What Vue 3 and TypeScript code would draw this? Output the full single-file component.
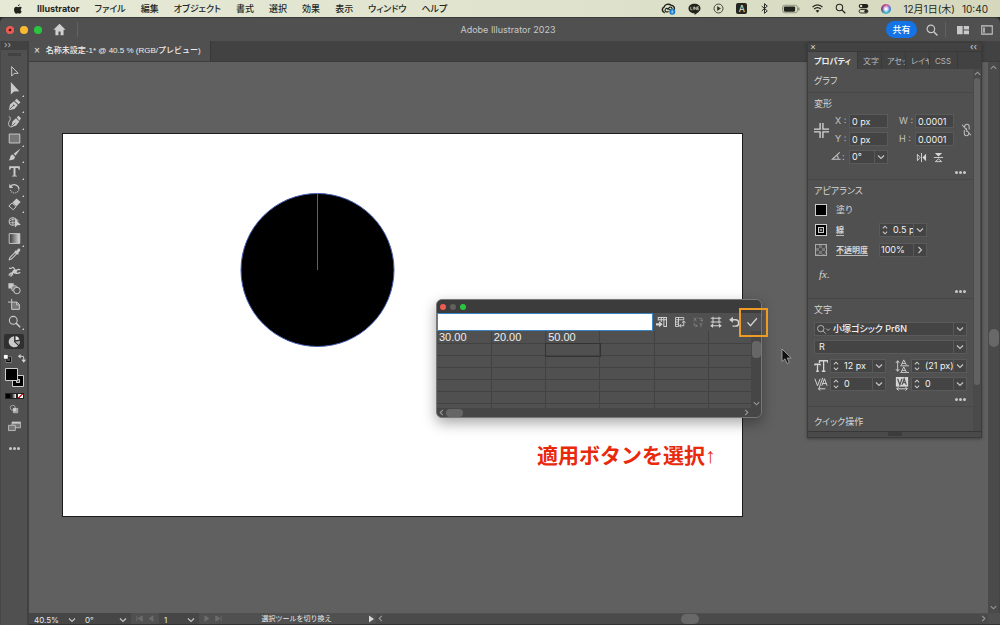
<script setup lang="ts">
import { ref } from 'vue'

interface Tool {
  name: string
  art: string
  flyout?: boolean
}

const menus: string[] = ['ファイル', '編集', 'オブジェクト', '書式', '選択', '効果', '表示', 'ウィンドウ', 'ヘルプ']

const tools: Tool[] = [
  { name: '選択', art: '<path d="M4.5 2v11.6l3-3.2 5-.2z" fill="none" stroke="currentColor" stroke-width="1.2"/>' },
  { name: 'ダイレクト選択', flyout: true, art: '<path d="M3.5 0v15.500l3.900-3.900 6.500-.3z" fill="currentColor"/>' },
  { name: 'ペン', flyout: true, art: '<path d="M1 15 2.500 8l4.800-4 4.800 4.500L8 13.500z" fill="currentColor"/><path d="m8.300 3.300 2.300-2.500 4.700 4.500-2.300 2.500z" fill="currentColor"/><path d="m2 14 4.500-4.500" stroke="#505050"/><circle cx="7" cy="9" r="1.100" fill="#505050"/>' },
  { name: '曲線', flyout: true, art: '<path d="M4 15 5.500 8l4.300-4 4.200 4-4 4.800z" fill="currentColor"/><path d="M10.800 3.200 13 .800l3 3.200-2 3z" fill="currentColor"/><path d="m5 13.500 4-4" stroke="#505050"/><path d="M1 2c2 0 2 2 1.500 4S0 9 .8 12s3 3 5 2" fill="none" stroke="currentColor" stroke-width="1.100"/>' },
  { name: '長方形', flyout: true, art: '<path d="M1.500 2.500h13v11h-13z" fill="#777" stroke="currentColor" stroke-width="1.200"/>' },
  { name: 'ブラシ', flyout: true, art: '<path d="M15.500.5 7 7l2.300 2.600z" fill="currentColor"/><path d="M6 8 8.600 11c0 3-3.600 4.500-8.100 4 1.800-.7 1.800-2 2.100-3.300C3 9.300 4.400 8.100 6 8z" fill="currentColor"/>' },
  { name: '文字', flyout: true, art: '<path d="M1.500 1.500h13v4.300h-1.300c-.3-1.600-.8-2.200-2-2.200H9.200v8.600c0 .8.600 1 1.800 1v1.100H5v-1.100c1.200 0 1.800-.2 1.800-1V3.600h-2c-1.200 0-1.700.6-2 2.200H1.500z" fill="currentColor"/>' },
  { name: '回転', flyout: true, art: '<path d="M3 5.500C6 1.500 13 3 13.500 8.500" fill="none" stroke="currentColor" stroke-width="1.500"/><path d="M13.400 9C12.500 15 3.500 15 3 9" fill="none" stroke="currentColor" stroke-width="1.300" stroke-dasharray="1.300 1.300"/><path d="M1.500 2.500v5h5z" fill="currentColor"/>' },
  { name: '消しゴム', flyout: true, art: '<path d="m5.500 5.500 5-5 5 4.500-5 5z" fill="currentColor"/><path d="m5 6.200 5 4.500L6.500 14.500 1 9.800z" fill="none" stroke="currentColor" stroke-width="1.200"/>' },
  { name: '形状形成', art: '<circle cx="6" cy="8" r="4.800" fill="none" stroke="currentColor" stroke-width="1.100"/><path d="M1.200 8C5 5 9 4 13 7M1.500 9.500h7M6 3v10" fill="none" stroke="currentColor"/><path d="M8.500 4.500v11l2.900-2.900 4.400-.2z" fill="currentColor"/>' },
  { name: 'グラデーション', flyout: true, art: '<defs><linearGradient id="toolFade"><stop stop-color="#333"/><stop offset="1" stop-color="#ddd"/></linearGradient></defs><path d="M1.500 2h13v12h-13z" fill="url(#toolFade)" stroke="currentColor" stroke-width="1.200"/>' },
  { name: 'スポイト', art: '<path d="m1.500 14.500.8-2.700L8.800 5.300l1.900 1.900-6.500 6.500z" fill="none" stroke="currentColor" stroke-width="1.300"/><path d="m8 4 1.200-1.200.9.8 2-2.400c1.500-1.500 4 .5 2.700 2.500L12.400 6l1 1-1.200 1.200z" fill="currentColor"/>' },
  { name: 'パペットワープ', art: '<path d="M1.500 4c4 1 3.500-2 5-1s1 3 3 3.500S12 4 15 6M1 13c1.500-3 4-4 7-3.500s4 2 7-.5M3 14c2-1 3-3 3-6M10 6v5" fill="none" stroke="currentColor" stroke-width="1.600"/><circle cx="8" cy="8" r="2.400" fill="currentColor"/>' },
  { name: 'ブレンド', art: '<path d="M.5 1.500h6.500v6.500H.5z" fill="currentColor"/><rect x="4.500" y="4.500" width="6.500" height="6.500" rx="2" fill="#888" stroke="currentColor"/><circle cx="11" cy="10.500" r="4" fill="#505050" stroke="currentColor" stroke-width="1.200"/>' },
  { name: 'アートボード', art: '<path d="M4.500 1v4M0 5h4" stroke="currentColor" stroke-width="1.200"/><path d="M4.500 5H11l3 3v6H4.500z" fill="#777" stroke="currentColor" stroke-width="1.200"/><path d="M10.500 5v3.500H14" fill="none" stroke="currentColor"/>' },
  { name: 'ズーム', flyout: true, art: '<circle cx="6.500" cy="6.500" r="4.800" fill="none" stroke="currentColor" stroke-width="1.300"/><path d="m10 10 5 5" stroke="currentColor" stroke-width="1.800"/>' },
]

const graphActions: Tool[] = [
  { name: 'データの読み込み', art: '<path d="M3 6V2h11v12h-4M3 5h11M7 2v6M10.500 2v12" fill="none" stroke="currentColor" stroke-width="1.400"/><path d="M0 9.500h4V7l5 4-5 4v-2.500H0z" fill="currentColor"/>' },
  { name: '行列置換', art: '<path d="M2 2h11v3H2zM2 5v9h4V2M2 8h4M2 11h4" fill="none" stroke="currentColor" stroke-width="1.200"/><path d="M8 13h5V7M9.500 11 7 13l2.500 2M11 9l2-2.500L15 9" fill="none" stroke="currentColor" stroke-width="1.300"/>' },
  { name: 'XY軸の入れ替え', art: '<g opacity=".35" fill="none" stroke="currentColor" stroke-width="1.200"><path d="m2 2 4 5M6 2 2 7M10 9l2 3 2-3M12 12v3M9 3h4v4M11 5l2 2 2-2M3 9v4h4M5 11l2 2-2 2"/></g>' },
  { name: 'セルスタイル', art: '<path d="M1 3h14M1 8h14M4 1v9M12 1v9M2 13h12M4 11l-2.500 2L4 15M12 11l2.500 2-2.500 2" fill="none" stroke="currentColor" stroke-width="1.400"/>' },
  { name: '復帰', art: '<path d="M3 5h7a4 4 0 0 1 0 8.500H6" fill="none" stroke="currentColor" stroke-width="1.900"/><path d="M6.500 1v8L1.500 5z" fill="currentColor"/>' },
  { name: '適用', art: '<path d="m2 8.500 4 4.500 8.500-10" fill="none" stroke="currentColor" stroke-width="1.800"/>' },
]

const graphRows = ref<string[][]>([
  ['30.00', '20.00', '50.00', '', '', ''],
  ...Array.from({ length: 6 }, () => ['', '', '', '', '', '']),
])
const entry = ref('')
const panelTabs: string[] = ['文字', 'アセッ', 'レイヤ', 'CSS']
const geometry = ref({ x: '0 px', y: '0 px', w: '0.0001', h: '0.0001', angle: '0°' })
const stroke = ref('0.5 px')
const opacity = ref('100%')
const textFields = ref([
  { name: 'フォントサイズ', value: '12 px', art: '<path d="M1 6h6M4 6v8M2.500 14h3M1 5.500v2M7 5.500v2M6 2h10M11 2v12M9 14h4M6.200 1.500v3M15.800 1.500v3" fill="none" stroke="currentColor" stroke-width="1.500"/>' },
  { name: '行送り', value: '(21 px)', art: '<path d="M7 7l3-6 3 6M8 5h4M7 15l3-6 3 6M8 13h4M6 7.800h10M6 15.500h10M3 2v12M1 4.500 3 2l2 2.500M1 11.500 3 14l2-2.500" fill="none" stroke="currentColor"/>' },
  { name: 'カーニング', value: '0', art: '<path d="m1 2 3 8 3-8M6 12 10 1M9 10l3-8 3 8M10 7.500h4M5 13.500h8M7 11.500l-2 2 2 2" fill="none" stroke="currentColor" stroke-width="1.100"/>' },
  { name: 'トラッキング', value: '0', art: '<path d="M1 0h14v11H1z" fill="currentColor"/><path d="m3 2 2.500 7L8 2M8 9l2.500-7L13 9M9 6.500h3" fill="none" stroke="#505050" stroke-width="1.400"/><path d="M2 13.500h12M4 11.500l-2 2 2 2M12 11.500l2 2-2 2" fill="none" stroke="currentColor" stroke-width="1.100"/>' },
])
</script>

<template>
  <div class="desktop">
    <header class="menubar">
      <nav class="menus" aria-label="メニュー">
        <svg class="apple" viewBox="0 0 16 16" aria-hidden="true"><path d="M10.800.2c.1 1.600-1.400 3.200-2.900 3.100C7.700 1.800 9.300.3 10.800.2zM13.900 11.800c-.8 1.900-1.900 3.700-3.200 3.700-1.100 0-1.400-.7-2.600-.7s-1.600.7-2.600.7C3.600 15.500 1.600 12 1.600 9c0-2.900 1.800-4.600 3.700-4.600 1.200 0 2 .7 2.900.7.900 0 1.800-.8 3.200-.8 1 0 2.100.5 2.700 1.500-2.600 1.500-2.200 4.900-.2 6z" fill="#20221c" /></svg>
        <button class="menu strong">Illustrator</button>
        <button v-for="menu in menus" :key="menu" class="menu">{{ menu }}</button>
      </nav>
      <div class="tray">
        <svg class="wide" viewBox="0 0 20 16"><path d="M5 13a4 4 0 0 1-1-7.500C5 2 10 0 13.500 3c3 0 5 3 4 6" fill="none" stroke="#20221c" stroke-width="2" /><path d="M10 11c-3 2.500-6-.5-4-3s4 0 6 1 4-1 2-3-4 1-5 3" fill="none" stroke="#20221c" stroke-width="1.500" /><circle cx="15" cy="11.500" r="4" fill="#1479c9" /><path d="M13 12h4M15 9v5" stroke="#b8dbef" /></svg>
        <svg class="bubble" viewBox="0 0 16 16"><path d="M8 1c4.500 0 8 2.700 8 6.200 0 3.300-3.500 5.500-7.500 8.300-.5.300-.7-.2-.4-1.800C3.500 13.500 0 10.800 0 7.200 0 3.700 3.500 1 8 1z" fill="#20221c" /><path d="M3 5v4h2M6.500 5v4M8 9V5l2.500 4V5M14 5h-2v4h2M12 7h2" fill="none" stroke="#d8dcc4" stroke-width=".9" /></svg>
        <svg viewBox="0 0 16 16"><circle cx="8" cy="8" r="6.500" fill="none" stroke="#34372c" stroke-width="1.300" /><path d="m6 4.500 5.500 3.500L6 11.500z" fill="#34372c" /></svg>
        <span class="ime">A</span>
        <svg viewBox="0 0 16 16"><path d="m4 4.500 8 7L8 15V1l4 3.500-8 7" fill="none" stroke="#20221c" stroke-width="1.400" /></svg>
        <svg class="battery" viewBox="0 0 24 16"><rect x=".7" y="3" width="20" height="10" rx="3" fill="none" stroke="#777a6c" /><rect x="2.500" y="4.500" width="15" height="7" rx="1.500" fill="#20221c" /><path d="M22.500 6v4" stroke="#777a6c" stroke-width="1.500" /></svg>
        <svg viewBox="0 0 16 16"><path d="M.8 6c4-4.500 10.400-4.500 14.400 0M3.200 8.700c2.800-2.800 6.800-2.800 9.600 0" fill="none" stroke="#20221c" stroke-width="1.900" /><path d="m8 14-2.700-3c1.500-1.300 3.900-1.300 5.400 0z" fill="#20221c" /></svg>
        <svg viewBox="0 0 16 16"><circle cx="6.500" cy="6.500" r="4.700" fill="none" stroke="#20221c" stroke-width="1.500" /><path d="m10 10 5 5" stroke="#20221c" stroke-width="1.800" /></svg>
        <svg viewBox="0 0 16 16"><rect x="1" y="1.500" width="14" height="6" rx="3" fill="#20221c" /><circle cx="4.500" cy="4.500" r="1.800" fill="#d8dcc4" /><rect x="1.600" y="9.500" width="12.800" height="5" rx="2.500" fill="none" stroke="#20221c" stroke-width="1.300" /><circle cx="11.500" cy="12" r="2.200" fill="#20221c" /></svg>
        <span class="siri"></span>
        <time class="date">12月1日(木)</time>
        <time class="clock">10:40</time>
      </div>
    </header>

    <div class="app">
      <header class="titlebar">
        <div class="title-left">
          <div class="lights"><i class="red edited"></i><i class="amber"></i><i class="green"></i></div>
          <button aria-label="ホーム"><svg class="home" viewBox="0 0 16 16"><path d="M8 1 .500 8.200H3V15h3.700v-4.500h2.600V15H13V8.200h2.500z" fill="#d0d0d0" /></svg></button>
          <span class="rule"></span>
        </div>
        <h1>Adobe Illustrator 2023</h1>
        <div class="title-right">
          <button class="share">共有</button>
          <button aria-label="検索"><svg class="icon" viewBox="0 0 16 16"><circle cx="6.500" cy="6.500" r="5" fill="none" stroke="currentColor" stroke-width="1.600" /><path d="m10 10 5.300 5.300" stroke="currentColor" stroke-width="2" /></svg></button>
          <span class="rule"></span>
          <button aria-label="ドキュメントの配置"><svg class="icon" viewBox="0 0 16 16"><path d="M0 2.500h7.500v11H0zM9 2.500h7v4.800H9zM9 8.700h7v4.800H9z" fill="currentColor" /></svg></button>
          <button aria-label="ワークスペース"><svg class="icon" viewBox="0 0 16 16"><path d="M1 2.500h14v11H1z" fill="none" stroke="currentColor" stroke-width="1.400" /><path d="M3 4.500h2v7H3z" fill="currentColor" /></svg></button>
        </div>
      </header>

      <div class="body">
        <aside class="toolbar" aria-label="ツール">
          <div class="toolbar-head">››</div>
          <div class="grip"></div>
          <div class="tools">
            <button v-for="tool in tools" :key="tool.name" class="tool" :class="{ flyout: tool.flyout }" :aria-label="tool.name">
              <svg viewBox="0 0 16 16" v-html="tool.art"></svg>
            </button>
          </div>
          <button class="tool active" aria-label="円グラフ"><svg viewBox="0 0 16 16"><path d="M7.500 1.500a6.800 6.800 0 1 0 5 11.600L7.500 8.500z" fill="currentColor" /><path d="M13.300 12.300A6.800 6.800 0 0 0 14.800 7L8.800 8.200z" fill="#aaa" /><path d="M9.300 6.500V1.200a6 6 0 0 1 4.800 4.200z" fill="#e6e6e6" /></svg></button>
          <div class="swaps">
            <svg viewBox="0 0 16 16"><path d="M6 6h8v8H6z" fill="none" stroke="#000" stroke-width="3" /><path d="M5 5h10v10H5z" fill="none" stroke="currentColor" /><path d="M1 1h8v8H1z" fill="#fff" stroke="#222" /></svg>
            <svg viewBox="0 0 16 16"><path d="M4 4h5q3 0 3 3v5M6.500 1 3 4l3.500 3M9 10l3 4 3-4" fill="none" stroke="currentColor" stroke-width="1.800" /></svg>
          </div>
          <svg class="fillstroke" viewBox="0 0 21 21"><path d="M8.500 8.500h11v11h-11z" fill="#505050" stroke="#ccc" /><path d="M10.500 10.500h7v7h-7z" fill="#505050" stroke="#000" stroke-width="3" /><path d="M12.500 12.500h3v3h-3z" fill="#505050" stroke="#ccc" /><path d="M1.500 1.500h12v12h-12z" fill="#000" stroke="#ccc" /></svg>
          <div class="modes"><i class="solid"></i><i class="fade"></i><i class="none"></i></div>
          <button class="tool small" aria-label="描画モード"><svg viewBox="0 0 16 16"><circle cx="6" cy="6" r="4" fill="none" stroke="currentColor" /><path d="M7 7h7v7H7z" fill="#999" stroke="currentColor" /><circle cx="9" cy="9" r="3" fill="currentColor" /></svg></button>
          <button class="tool" aria-label="スクリーンモード"><svg viewBox="0 0 16 16"><path d="M5 2.500h10.500v7H5z" fill="#777" stroke="currentColor" /><path d="M5 3.500h10" stroke="currentColor" stroke-width="2" /><path d="M.5 6.500H9v6.500H.5z" fill="#777" stroke="currentColor" /></svg></button>
          <button class="more" aria-label="ツールバーを編集"><i></i><i></i><i></i></button>
        </aside>

        <main class="document">
          <div class="doc-tabs">
            <div class="doc-tab"><button aria-label="閉じる">×</button><span>名称未設定-1* @ 40.5 % (RGB/プレビュー)</span></div>
          </div>
          <div class="workspace">
            <section class="canvas">
              <div class="artboard"></div>
              <svg class="pie" viewBox="0 0 156 156"><circle cx="77.500" cy="78" r="76.500" fill="#000" stroke="#4660b4" /><path d="M77.500 2v76" stroke="#4660b4" /></svg>
              <p class="note">適用ボタンを選択↑</p>
            </section>
            <div class="vscroll"><svg class="chev" viewBox="0 0 10 10"><path d="m2 6.500 3-3 3 3" /></svg><i></i><svg class="chev" viewBox="0 0 10 10"><path d="m2 3.500 3 3 3-3" /></svg></div>
          </div>
          <footer class="status">
            <label class="pick zoom"><select aria-label="ズーム"><option>40.5%</option></select><svg class="chev" viewBox="0 0 10 10"><path d="m2 3.500 3 3 3-3" /></svg></label>
            <label class="pick turn"><select aria-label="回転"><option>0°</option></select><svg class="chev" viewBox="0 0 10 10"><path d="m2 3.500 3 3 3-3" /></svg></label>
            <div class="pager"><svg viewBox="0 0 20 10"><path d="M1 2v6M7 2v6L2.500 5zM19 2v6l-4.500-3z" /></svg></div>
            <label class="pick board"><select aria-label="アートボード"><option>1</option></select><svg class="chev" viewBox="0 0 10 10"><path d="m2 3.500 3 3 3-3" /></svg></label>
            <div class="pager"><svg viewBox="0 0 20 10"><path d="M1 2v6l4.500-3zM13 2v6l4.500-3zM19 2v6" /></svg></div>
            <span class="hint">選択ツールを切り換え</span>
            <svg class="play" viewBox="0 0 10 10"><path d="M3 1.500v7L8 5z" fill="#d8d8d8" /></svg>
            <div class="hscroll"><svg class="chev" viewBox="0 0 10 10"><path d="m6.500 2-3 3 3 3" /></svg><i></i><svg class="chev" viewBox="0 0 10 10"><path d="m3.500 2 3 3-3 3" /></svg></div>
          </footer>
        </main>
      </div>
    </div>

    <section class="graph" aria-label="グラフデータ">
      <div class="graph-title"><i class="red"></i><i class="grey"></i><i class="green"></i></div>
      <div class="graph-bar">
        <input v-model="entry" aria-label="セルの値">
        <button v-for="action in graphActions" :key="action.name" :aria-label="action.name"><svg viewBox="0 0 16 16" v-html="action.art"></svg></button>
      </div>
      <div class="graph-main">
        <div class="sheet">
          <table>
            <tbody>
              <tr v-for="(row, r) in graphRows" :key="r">
                <td v-for="(cell, c) in row" :key="c" :class="{ selected: r === 1 && c === 2 }">{{ cell }}</td>
              </tr>
            </tbody>
          </table>
        </div>
        <div class="sheet-v"><i></i><svg class="chev" viewBox="0 0 10 10"><path d="m2 3.500 3 3 3-3" /></svg></div>
      </div>
      <div class="sheet-h"><svg class="chev" viewBox="0 0 10 10"><path d="m6.500 2-3 3 3 3" /></svg><i></i><svg class="chev" viewBox="0 0 10 10"><path d="m3.500 2 3 3-3 3" /></svg></div>
    </section>
    <div class="marker"></div>
    <svg class="cursor" viewBox="0 0 11 17"><path d="M1 1v12.500l3-2.700 2 4.700 2.200-1L6.200 10h4z" fill="#111" stroke="#bbb" stroke-width=".7" /></svg>

    <aside class="panel" aria-label="プロパティ">
      <div class="panel-head"><button aria-label="閉じる">×</button><span>‹‹</span></div>
      <div class="panel-tabs" role="tablist">
        <button class="current" role="tab" aria-selected="true">プロパティ</button>
        <button v-for="tab in panelTabs" :key="tab" role="tab">{{ tab }}</button>
      </div>
      <div class="panel-body">
        <div class="sections">
          <section class="kind">グラフ</section>
          <section>
            <h2>変形</h2>
            <div class="transform">
              <svg class="origin" viewBox="0 0 16 16"><path d="M6.500 0v6.500H0M9.500 0v6.500H16M6.500 16V9.500H0M9.500 16V9.500H16" fill="none" stroke="currentColor" stroke-width="1.400" /></svg>
              <label for="gx">X :</label><input id="gx" v-model="geometry.x" class="box">
              <label for="gw">W :</label><input id="gw" v-model="geometry.w" class="box">
              <svg class="link" viewBox="0 0 12 16"><path d="M4 6V4a2.500 2.500 0 0 1 5 0v3.500M3.500 8v4a2.500 2.500 0 0 0 5 0V11M6 6v4M1 2l10 12" fill="none" stroke="currentColor" stroke-width="1.200" /></svg>
              <label for="gy">Y :</label><input id="gy" v-model="geometry.y" class="box">
              <label for="gh">H :</label><input id="gh" v-model="geometry.h" class="box">
              <label for="ga" class="angle-label"><svg viewBox="0 0 12 12"><path d="M9.500 1.500 1.500 9h9M6 4.500c1.500 1 2 2.500 2 4.500" fill="none" stroke="currentColor" stroke-width="1.200" /></svg>:</label>
              <span class="pick box angle"><select id="ga" v-model="geometry.angle"><option>0°</option></select><svg class="chev" viewBox="0 0 10 10"><path d="m2 3.500 3 3 3-3" /></svg></span>
              <span class="flips">
                <button aria-label="水平方向に反転"><svg viewBox="0 0 12 12"><path d="M6 1v10" stroke="currentColor" /><path d="M1.500 2.500v7L4.500 6z" fill="none" stroke="currentColor" /><path d="M11 2v8L7 6z" fill="currentColor" /></svg></button>
                <button aria-label="垂直方向に反転"><svg viewBox="0 0 12 12"><path d="M1 6h10" stroke="currentColor" /><path d="M2.500 10.500h7L6 7.500z" fill="none" stroke="currentColor" /><path d="M2 1h8L6 5z" fill="currentColor" /></svg></button>
              </span>
            </div>
            <button class="more" aria-label="変形の詳細"><i></i><i></i><i></i></button>
          </section>
          <section class="appearance">
            <h2>アピアランス</h2>
            <div class="look"><i class="swatch"></i><span>塗り</span></div>
            <div class="look">
              <i class="swatch ring"></i><label for="sw" class="under">線</label>
              <span class="combo box"><svg class="spin" viewBox="0 0 8 14"><path d="m1.500 5 2.500-2.500L6.500 5M1.500 9 4 11.500 6.500 9" /></svg><input id="sw" v-model="stroke"><svg class="chev" viewBox="0 0 10 10"><path d="m2 3.500 3 3 3-3" /></svg></span>
            </div>
            <div class="look">
              <i class="swatch checks"></i><label for="op" class="under">不透明度</label>
              <span class="combo box"><input id="op" v-model="opacity"><svg class="chev" viewBox="0 0 10 10"><path d="m3.500 2 3 3-3 3" /></svg></span>
            </div>
            <button class="fx">fx.</button>
            <button class="more" aria-label="アピアランスの詳細"><i></i><i></i><i></i></button>
          </section>
          <section class="type">
            <h2>文字</h2>
            <label class="pick box family"><svg class="find" viewBox="0 0 16 12"><circle cx="5" cy="5" r="3.500" /><path d="m7.500 7.500 3 3M11 5l2 2 2-2" /></svg><select aria-label="フォント"><option>小塚ゴシック Pr6N</option></select><svg class="chev" viewBox="0 0 10 10"><path d="m2 3.500 3 3 3-3" /></svg></label>
            <label class="pick box weight"><select aria-label="スタイル"><option>R</option></select><svg class="chev" viewBox="0 0 10 10"><path d="m2 3.500 3 3 3-3" /></svg></label>
            <div class="metrics">
              <label v-for="field in textFields" :key="field.name" class="metric">
                <svg class="glyph" viewBox="0 0 16 16" v-html="field.art"></svg>
                <span class="combo box"><svg class="spin" viewBox="0 0 8 14"><path d="m1.500 5 2.500-2.500L6.500 5M1.500 9 4 11.500 6.500 9" /></svg><input v-model="field.value" :aria-label="field.name"><svg class="chev" viewBox="0 0 10 10"><path d="m2 3.500 3 3 3-3" /></svg></span>
              </label>
            </div>
            <button class="more" aria-label="文字の詳細"><i></i><i></i><i></i></button>
          </section>
          <section class="quick"><h2>クイック操作</h2></section>
        </div>
        <div class="panel-scroll"><svg class="chev" viewBox="0 0 10 10"><path d="m2 6.500 3-3 3 3" /></svg><i></i></div>
      </div>
      <div class="panel-foot"><i></i></div>
    </aside>
  </div>
</template>

<style>
html,
body {
  margin: 0;
  background: #2a2a2a;
  overflow: hidden;
}
</style>

<style scoped>
* {
  box-sizing: border-box;
}
.desktop {
  position: relative;
  height: 100vh;
  display: flex;
  flex-direction: column;
  font-family: Inter, 'Noto Sans CJK JP', sans-serif;
  font-size: 9px;
  line-height: 12px;
  color: #d6d6d6;
}
button,
input,
select {
  font: inherit;
  color: inherit;
  background: none;
  border: 0;
  padding: 0;
  margin: 0;
  min-width: 0;
  outline: 0;
}
select {
  appearance: none;
}
button {
  display: flex;
  align-items: center;
  justify-content: center;
  white-space: nowrap;
}
svg {
  display: block;
  flex: none;
}
h1,
h2,
p {
  margin: 0;
  font-size: inherit;
  font-weight: 400;
}
.chev {
  width: 10px;
  height: 10px;
  fill: none;
  stroke: #c4c4c4;
  stroke-width: 1.2;
}
.vscroll .chev,
.hscroll .chev,
.sheet-v .chev,
.sheet-h .chev,
.panel-scroll .chev {
  width: 9px;
  height: 9px;
  stroke: #999;
}
.menubar {
  flex: none;
  height: 17px;
  display: flex;
  justify-content: space-between;
  align-items: center;
  padding: 0 12px 0 13px;
  background: linear-gradient(90deg, #e5e9d5, #e0e4cf 50%, #d5d8bc);
  color: #25271f;
}
.menus,
.tray {
  display: flex;
  align-items: center;
}
.menus {
  gap: 15px;
  font-feature-settings: 'palt';
  font-weight: 500;
}
.apple {
  width: 10px;
  height: 10px;
}
.strong {
  margin-left: -1px;
  font-weight: 700;
}
.tray {
  gap: 12px;
  font-size: 10px;
}
.tray svg {
  width: 11px;
  height: 11px;
}
.tray .wide {
  width: 15px;
  height: 12px;
}
.tray .bubble {
  width: 13px;
  height: 12px;
}
.tray .battery {
  width: 18px;
  height: 12px;
}
.ime {
  width: 11px;
  height: 11px;
  border-radius: 2px;
  background: #25271f;
  color: #e0e4cf;
  font-size: 9px;
  line-height: 11px;
  text-align: center;
}
.siri {
  width: 10px;
  height: 10px;
  border-radius: 50%;
  background: radial-gradient(#f2f4ff 15%, transparent 55%), conic-gradient(#e05ba2, #3c7be0, #34c2c2, #6b3b8e, #d84a7c);
}
.date {
  font-feature-settings: 'palt';
}
.clock {
  margin-left: -5px;
}
.app {
  flex: 1;
  min-height: 0;
  display: flex;
  flex-direction: column;
  background: #505050;
  border-top: 1px solid #3a3a3a;
  border-radius: 5px 5px 0 0;
}
.titlebar {
  flex: none;
  height: 23px;
  display: grid;
  grid-template-columns: 1fr auto 1fr;
  align-items: center;
  padding: 0 6px;
}
.titlebar h1 {
  padding-left: 16px;
  color: #c8c8c8;
}
.title-left,
.title-right,
.lights {
  display: flex;
  align-items: center;
}
.title-left {
  gap: 11px;
}
.lights {
  gap: 6px;
}
.lights i {
  width: 8px;
  height: 8px;
  border-radius: 50%;
}
.red {
  background: #f05b54;
}
.lights .edited {
  background: radial-gradient(#5a0d0a 20%, #f05b54 30%);
}
.amber {
  background: #fbb92f;
}
.green {
  background: #2ac63f;
}
.home {
  width: 13px;
  height: 13px;
}
.rule {
  width: 1px;
  height: 15px;
  background: #626262;
}
.title-right {
  justify-content: flex-end;
  gap: 8px;
}
.icon {
  width: 12px;
  height: 12px;
  color: #c8c8c8;
}
.title-right button:not(.share) {
  padding: 0 1px;
}
.title-right button:last-child {
  margin-left: 2px;
}
.share {
  width: 31px;
  height: 17px;
  border-radius: 9px;
  background: #1473e6;
  color: #fff;
  font-weight: 500;
}
.title-right .rule {
  margin: 0 2px 0 -2px;
}
.body {
  flex: 1;
  min-height: 0;
  display: flex;
}
.toolbar {
  flex: none;
  width: 29px;
  border-right: 2px solid #414141;
  border-left: 1px solid #474747;
  display: flex;
  flex-direction: column;
  align-items: center;
}
.toolbar-head {
  align-self: stretch;
  height: 9px;
  padding-left: 3px;
  background: #424242;
  line-height: 7px;
  color: #bbb;
}
.grip {
  width: 13px;
  height: 3px;
  margin: 3px 0 9px;
  background: #424242;
}
.tools {
  height: 263px;
  display: flex;
  flex-direction: column;
  justify-content: space-between;
}
.tool {
  position: relative;
  color: #cacaca;
}
.tool svg {
  width: 13px;
  height: 13px;
}
.flyout::after {
  content: '';
  position: absolute;
  right: -3px;
  bottom: -2px;
  border: 1px solid;
  border-color: transparent #ccc #ccc transparent;
}
.active {
  width: 20px;
  height: 15px;
  margin: 6px 0 5px;
  border-radius: 2px;
  background: #303030;
}
.swaps {
  display: flex;
  gap: 5px;
}
.swaps svg {
  width: 9px;
  height: 9px;
}
.fillstroke {
  width: 21px;
  height: 21px;
  margin: 4px 0 5px;
}
.modes {
  display: flex;
}
.modes i {
  width: 6px;
  height: 6px;
  border: 1px solid #222;
}
.solid {
  background: #000;
}
.fade {
  background: linear-gradient(90deg, #222, #fff);
}
.modes .none {
  width: 7px;
  background: linear-gradient(135deg, #fff 40%, #e02020 40% 60%, #fff 60%);
}
.small {
  margin: 5px 0 6px;
}
.small svg {
  width: 10px;
  height: 10px;
}
.more {
  gap: 1px;
}
.more i {
  width: 3px;
  height: 3px;
  border-radius: 50%;
  background: #c8c8c8;
}
.toolbar .more {
  margin-top: 14px;
}
.document {
  flex: 1;
  min-width: 0;
  display: flex;
  flex-direction: column;
}
.doc-tabs {
  flex: none;
  height: 21px;
  display: flex;
  background: #424242;
  border-bottom: 1px solid #3c3c3c;
}
.doc-tab {
  display: flex;
  align-items: center;
  gap: 6px;
  padding: 0 9px 0 5px;
  background: #505050;
  border-right: 1px solid #393939;
  color: #eee;
  font-family: 'Liberation Sans', 'Noto Sans CJK JP', sans-serif;
  font-size: 8px;
  font-weight: 500;
}
.doc-tab button {
  font-size: 10px;
}
.workspace {
  flex: 1;
  min-height: 0;
  display: flex;
}
.canvas {
  position: relative;
  flex: 1;
  background: #606060;
  overflow: hidden;
}
.artboard {
  position: absolute;
  left: 33px;
  top: 71px;
  width: 681px;
  height: 384px;
  background: #fff;
  border: 1px solid #1c1c1c;
}
.pie {
  position: absolute;
  left: 211px;
  top: 130px;
  width: 156px;
  height: 156px;
}
.note {
  position: absolute;
  left: 508px;
  top: 380px;
  font-family: 'Liberation Sans', 'Noto Sans CJK JP', sans-serif;
  font-size: 21px;
  line-height: 28px;
  font-weight: 700;
  color: #e8290b;
  white-space: nowrap;
}
.vscroll {
  flex: none;
  width: 12px;
  padding: 1px 0;
  display: flex;
  flex-direction: column;
  justify-content: space-between;
  align-items: center;
  background: #4a4a4a;
  border-right: 1px solid #444;
}
.vscroll i {
  width: 10px;
  height: 18px;
  border-radius: 5px;
  background: #686868;
}
.status {
  flex: none;
  height: 12px;
  display: flex;
  align-items: center;
  border-bottom: 1px solid #333;
  overflow: hidden;
  font-size: 8px;
  color: #e8e8e8;
}
.pick,
.combo {
  display: flex;
  align-items: center;
}
.pick select,
.combo input {
  flex: 1;
  width: 0;
}
.status .pick {
  height: 12px;
  padding: 2px 3px 0 5px;
  background: #464646;
}
.zoom,
.turn {
  width: 51px;
}
.board {
  width: 40px;
}
.pager svg {
  width: 20px;
  height: 9px;
  margin: 0 4px;
  fill: #6c6c6c;
  stroke: #6c6c6c;
}
.hint {
  flex: none;
  width: 139px;
  text-align: center;
  font-size: 7px;
}
.play {
  width: 10px;
  height: 10px;
}
.hscroll {
  flex: 1;
  display: flex;
  align-items: center;
  justify-content: space-between;
  margin-right: 12px;
  background: #4a4a4a;
}
.hscroll i {
  width: 18px;
  height: 10px;
  margin-left: 16px;
  border-radius: 5px;
  background: #686868;
}
.graph {
  position: absolute;
  left: 436px;
  top: 299px;
  width: 326px;
  border: 1px solid #777;
  border-radius: 6px;
  overflow: hidden;
  background: #505050;
  box-shadow: 0 5px 14px rgba(0, 0, 0, 0.35);
}
.graph-title {
  height: 13px;
  display: flex;
  align-items: center;
  gap: 4px;
  padding: 0 3px;
  background: #3c3c3c;
}
.graph-title i {
  width: 6px;
  height: 6px;
  border-radius: 50%;
}
.grey {
  background: #606060;
}
.graph-bar {
  display: flex;
  align-items: center;
  color: #d2d2d2;
}
.graph-bar input {
  flex: 1;
  height: 18px;
  background: #fff;
  color: #222;
  border: 1px solid #3d86c6;
}
.graph-bar button {
  width: 18px;
  height: 18px;
}
.graph-bar svg {
  width: 12px;
  height: 12px;
}
.graph-main {
  display: flex;
}
.sheet {
  flex: 1;
  height: 77px;
  overflow: hidden;
}
table {
  width: 104%;
  table-layout: fixed;
  border-collapse: collapse;
  color: #eee;
  font-family: 'Liberation Sans', sans-serif;
  font-size: 11px;
}
td {
  height: 12px;
  padding: 1px 0 0 2px;
  line-height: 11px;
  border: solid #424242;
  border-width: 0 1px 1px 0;
}
.selected {
  outline: 1px solid #333;
}
.sheet-v {
  width: 10px;
  padding-top: 10px;
  display: flex;
  flex-direction: column;
  justify-content: space-between;
  align-items: center;
  background: #464646;
}
.sheet-v i {
  width: 9px;
  height: 17px;
  border-radius: 4px;
  background: #666;
}
.sheet-h {
  display: flex;
  align-items: center;
  height: 9px;
  padding-right: 10px;
  background: #464646;
}
.sheet-h i {
  width: 17px;
  height: 8px;
  border-radius: 4px;
  background: #666;
  margin-right: auto;
}
.marker {
  position: absolute;
  left: 739px;
  top: 308px;
  width: 29px;
  height: 29px;
  border: 2px solid #ee9b25;
}
.cursor {
  position: absolute;
  left: 781px;
  top: 348px;
  width: 11px;
  height: 17px;
}
.panel {
  position: absolute;
  right: 18px;
  top: 42px;
  width: 175px;
  background: #505050;
  border: 1px solid #3c3c3c;
  box-shadow: 0 1px 3px rgba(0, 0, 0, 0.35);
  font-feature-settings: 'palt';
}
.panel-head {
  height: 8px;
  padding: 0 4px 0 2px;
  display: flex;
  align-items: center;
  justify-content: space-between;
  background: #424242;
  line-height: 8px;
}
.panel-tabs {
  height: 18px;
  display: flex;
  background: #424242;
  border-top: 1px solid #393939;
}
.panel-tabs button {
  width: 24px;
  padding-left: 5px;
  justify-content: flex-start;
  overflow: hidden;
  border-right: 1px solid #3a3a3a;
  color: #b8b8b8;
  font-size: 8px;
}
.panel-tabs .current {
  width: 50px;
  padding-left: 6px;
  background: #505050;
  color: #eee;
  font-weight: 700;
}
.panel-tabs button:last-child {
  width: 28px;
}
.panel-body {
  display: flex;
}
.sections {
  flex: 1;
  min-width: 0;
}
.sections section {
  padding: 5px 7px 4px 6px;
  border-bottom: 1px solid #474747;
}
.sections .kind {
  padding: 6px;
  height: 24px;
}
.transform {
  display: grid;
  grid-template-columns: 21px 14px 39px 27px 39px 1fr;
  grid-auto-rows: 18px;
  align-items: center;
  margin-top: 2px;
}
.transform label {
  color: #c4c4c4;
}
.transform label[for='gw'],
.transform label[for='gh'] {
  padding-left: 11px;
  white-space: nowrap;
}
.origin {
  grid-row: 1 / 3;
  width: 15px;
  height: 15px;
}
.link {
  grid-column: 6;
  grid-row: 1 / 3;
  justify-self: end;
  width: 11px;
  height: 14px;
  margin-right: -6px;
  color: #bbb;
}
.box {
  height: 14px;
  width: 100%;
  background: #444;
  border: 1px solid #5a5a5a;
  color: #f2f2f2;
  padding: 0 0 0 2px;
}
.transform .angle-label {
  grid-column: 2;
  display: flex;
  margin-left: -4px;
}
.angle-label svg {
  width: 11px;
  height: 11px;
}
.flips {
  grid-column: 4 / 6;
  display: flex;
  gap: 6px;
  padding-left: 28px;
}
.flips svg {
  width: 11px;
  height: 11px;
}
.box .chev {
  width: 13px;
  height: 12px;
  padding: 1px;
  border-left: 1px solid #585858;
}
.sections .more {
  margin: 3px 0 0 auto;
  padding-right: 0;
  height: 6px;
}
.look {
  display: grid;
  grid-template-columns: 21px 43px 48px;
  height: 20px;
  padding-left: 1px;
  align-items: center;
}
.appearance h2 {
  margin-bottom: 3px;
}
.swatch {
  width: 12px;
  height: 12px;
  border: 1px solid #ccc;
  background: #000;
}
.ring {
  background: linear-gradient(#888, #888) center / 2px 2px no-repeat, linear-gradient(#222, #222) center / 4px 4px no-repeat, linear-gradient(#ccc, #ccc) center / 6px 6px no-repeat #000;
}
.checks {
  background: repeating-conic-gradient(#777 0 25%, #505050 0 50%) 0 0 / 6px 6px;
  border-color: #aaa;
}
.under {
  width: max-content;
  line-height: 10px;
  border-bottom: 1px solid #bbb;
  font-size: 8px;
  font-weight: 700;
}
.spin {
  width: 8px;
  height: 12px;
  margin-right: 4px;
  fill: none;
  stroke: #ccc;
  stroke-width: 1.2;
}
.combo.box {
  padding-left: 1px;
}
.fx {
  margin: 6px 0 0 5px;
  font: italic 11px/16px 'Liberation Serif', serif;
}
.appearance .more {
  margin-top: 6px;
}
.type .box {
  width: 153px;
}
.family {
  margin-top: 6px;
}
.family.box {
  padding-left: 1px;
  font-weight: 500;
}
.weight.box {
  padding-left: 4px;
}
.find {
  width: 15px;
  height: 11px;
  margin-right: 2px;
  fill: none;
  stroke: #bbb;
}
.weight {
  margin-top: 4px;
}
.metrics {
  display: grid;
  grid-template-columns: 81px 81px;
  grid-auto-rows: 18px;
  align-items: center;
  margin-top: 3px;
}
.metric {
  display: flex;
  align-items: center;
  gap: 2px;
}
.glyph {
  width: 14px;
  height: 14px;
}
.type .metric .box {
  width: 56px;
}
.sections .quick {
  border: 0;
  padding: 9px 6px 3px;
}
.panel-scroll {
  width: 8px;
  background: #4a4a4a;
  display: flex;
  flex-direction: column;
  align-items: center;
}
.panel-scroll i {
  width: 6px;
  height: 307px;
  border-radius: 3px;
  background: #626262;
}
.panel-foot {
  height: 6px;
  display: flex;
  justify-content: center;
  border-top: 1px solid #383838;
  background: #4a4a4a;
}
.panel-foot i {
  width: 14px;
  height: 4px;
  background: #3c3c3c;
}
</style>
